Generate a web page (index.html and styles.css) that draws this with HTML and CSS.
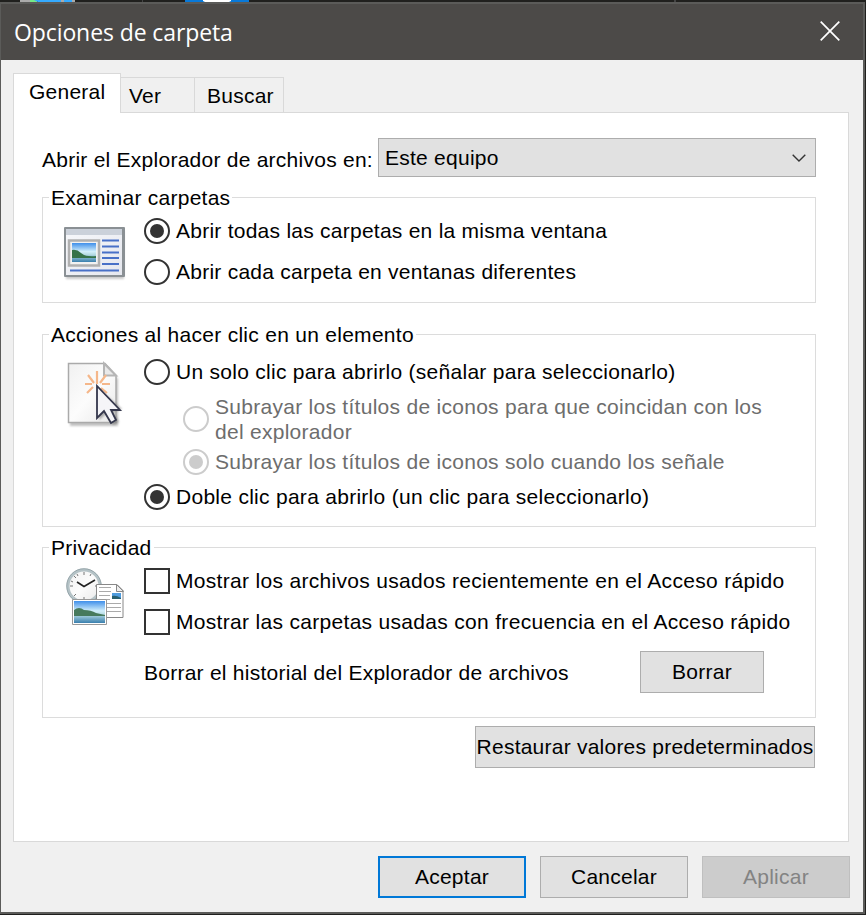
FILE: index.html
```html
<!DOCTYPE html>
<html lang="es">
<head>
<meta charset="utf-8">
<title>Opciones de carpeta</title>
<link rel="stylesheet" href="styles.css">
</head>
<body>
<div class="desktop"><svg width="866" height="2" viewBox="0 0 866 2"><path fill="#aaa" d="M20 0h10v2H20zM61 0h3v2h-3zM72 0h3v2h-3z"/><path fill="#76e887" d="M30 0h7v2h-7z"/><path fill="#35aaff" d="M34 0h27v2H38zM64 0h8v2h-8z"/><path fill="#444" d="M142 0h1v2h-1zM674 0h2v2h-2z"/><path fill="#0879d9" d="M185 0h64v2h-64z"/><path fill="#fff" d="M203 0h28v1l-2 1h-24l-2-1z"/></svg></div>
<main class="window">
  <header class="titlebar">
    <h1>Opciones de carpeta</h1>
    <svg class="close" width="20" height="20" viewBox="0 0 20 20"><path d="M.7.7l18.6 18.6M19.3.7L.7 19.3"/></svg>
  </header>
  <nav class="tabs">
    <span class="tab active">General</span><span class="tab ver">Ver</span><span class="tab buscar">Buscar</span>
  </nav>
  <div class="panel">
    <div class="open-row">
      <span class="open-label">Abrir el Explorador de archivos en:</span>
      <div class="select"><span>Este equipo</span><svg width="14" height="8" viewBox="0 0 14 8"><path d="M.7.8L7 7l6.300-6.200"/></svg></div>
    </div>

    <section class="group browse">
      <h2>Examinar carpetas</h2>
      <svg class="icon" width="68" height="60" viewBox="0 0 68 60">
        <defs>
          <linearGradient id="sky" x2="0" y2="1"><stop stop-color="#3f8fea"/><stop offset=".45" stop-color="#d2effb"/><stop offset=".6" stop-color="#b7dce4"/><stop offset="1" stop-color="#3a7fae"/></linearGradient>
          <linearGradient id="pane" x2="1" y2="1"><stop stop-color="#f7f8fb"/><stop offset="1" stop-color="#e5e7ee"/></linearGradient>
          <linearGradient id="paper" x2="1" y2="1"><stop stop-color="#f1f1f1"/><stop offset=".5" stop-color="#fcfcfc"/><stop offset="1" stop-color="#e8e8e8"/></linearGradient>
          <filter id="soft" x="-20%" y="-20%" width="150%" height="150%"><feGaussianBlur stdDeviation="1.2"/></filter>
        </defs>
        <path d="M4 7h58v48H4z" fill="#777" opacity=".4" filter="url(#soft)"/>
        <rect x="2" y="3" width="61" height="50" rx="1" fill="#8a9094"/>
        <path d="M4 5h56v46H4z" fill="url(#pane)"/><path d="M4 5h56v6H4z" fill="#cbd1da"/>
        <path d="M7 16.500h30v25H7z" fill="#f2f2f2" stroke="#b0b0b0" stroke-width="2.500"/>
        <path d="M10 19h24v19H10z" fill="url(#sky)"/><path d="M10 26q5-1 9 3t15 3v2H10z" fill="#367349"/>
        <path d="M40 16.500h17M40 22.500h17M40 28.500h17M40 34h17M40 40h17M8 46.500h49" stroke="#4870c7" stroke-width="2"/>
      </svg>
      <div class="options">
        <label class="option"><i class="radio on"></i><span>Abrir todas las carpetas en la misma ventana</span></label>
        <label class="option second"><i class="radio"></i><span>Abrir cada carpeta en ventanas diferentes</span></label>
      </div>
    </section>

    <section class="group click">
      <h2>Acciones al hacer clic en un elemento</h2>
      <svg class="icon" width="68" height="70" viewBox="0 0 68 70">
        <path d="M8 6h38l10 12v47H8z" fill="#777" opacity=".45" filter="url(#soft)"/>
        <path d="M6.500 2.500H43l11 12v47H6.500z" fill="url(#paper)" stroke="#aaa" stroke-width="1.500"/>
        <path d="M42 2.500v12h12z" fill="#e9e9e9" stroke="#b5b5b5" stroke-width="2"/>
        <path d="M35 10v13M26 14l6 8M44 14l-6 8M23 23h7M40 23h8M25 32l6-6M39 27l6 5" fill="none" stroke="#f5b78a" stroke-width="2.200"/>
        <path d="M37 28v31l7-6 7 11 6-3-5-10 8-3z" fill="#777" opacity=".6" filter="url(#soft)"/>
        <path d="M35 25v32l7-7 7 12 5-3-5-10h9z" fill="#f5f5f8" stroke="#34374c" stroke-width="1.800"/>
      </svg>
      <div class="options">
        <label class="option"><i class="radio"></i><span>Un solo clic para abrirlo (señalar para seleccionarlo)</span></label>
        <label class="option sub two"><i class="radio"></i><span>Subrayar los títulos de iconos para que coincidan con los<br>del explorador</span></label>
        <label class="option sub"><i class="radio on"></i><span>Subrayar los títulos de iconos solo cuando los señale</span></label>
        <label class="option dbl"><i class="radio on"></i><span>Doble clic para abrirlo (un clic para seleccionarlo)</span></label>
      </div>
    </section>

    <section class="group privacy">
      <h2>Privacidad</h2>
      <svg class="icon" width="68" height="62" viewBox="0 0 68 62">
        <circle cx="22" cy="19" r="16" fill="url(#paper)" stroke="#b4c2c6" stroke-width="3"/>
        <circle cx="22" cy="19" r="17.300" fill="none" stroke="#83939a" stroke-width=".7"/>
        <path d="M22 5v3M22 30v3M8 19h3M33 19h3M12 9l2 2M12 29l2-2M15 7l1 2M29 7l-1 2M9 14l2 1" stroke="#777" stroke-width="1"/>
        <path d="M15 15l7 4.500L33 13" fill="none" stroke="#222" stroke-width="1.600"/>
        <path d="M34.500 17.500H55l6 6v27H34.500z" fill="#fff" stroke="#888"/><path d="M54.500 17.500v7h7z" fill="#eee" stroke="#888"/>
        <path d="M37 20.500h12M37 24.500h12M37 28.500h11M37 32.500h11M43 36.500h16M43 40.500h16M43 44.500h16" stroke="#aaa"/>
        <path d="M50 26h9v6h-9z" fill="#4f9cde"/><path d="M50 29q4-1 9 2v1h-9z" fill="#285f6e"/>
        <path d="M10.500 32.500h34v25h-34z" fill="#fff" stroke="#999"/>
        <path d="M12 34h31v22H12z" fill="url(#sky)"/><path d="M12 43q5-4 10 0 7 0 12 3l9 2v1H12z" fill="#477a5d"/>
      </svg>
      <div class="options">
        <label class="option"><i class="check"></i><span>Mostrar los archivos usados recientemente en el Acceso rápido</span></label>
        <label class="option second"><i class="check"></i><span>Mostrar las carpetas usadas con frecuencia en el Acceso rápido</span></label>
        <div class="history"><span>Borrar el historial del Explorador de archivos</span><button class="btn">Borrar</button></div>
      </div>
    </section>
    <button class="btn restore">Restaurar valores predeterminados</button>
  </div>
  <footer class="actions">
    <button class="btn default">Aceptar</button>
    <button class="btn">Cancelar</button>
    <button class="btn disabled">Aplicar</button>
  </footer>
</main>
</body>
</html>
```
FILE: styles.css
```css
* { box-sizing: border-box; }
body {
  margin: 0;
  width: 866px;
  height: 915px;
  overflow: hidden;
  background: #20201e;
  font: 21px/25px "Liberation Sans", Arial, sans-serif;
  letter-spacing: 0.25px;
  color: #000;
  white-space: nowrap;
}
h1, h2 { margin: 0; font: inherit; }
svg { display: block; flex: none; }
.desktop { height: 2px; }
.window {
  width: 865px;
  height: 912px;
  border: 2px solid #5b5b59;
  border-left-width: 1px;
  background: #f0f0f0;
}
.titlebar {
  display: flex;
  justify-content: space-between;
  height: 56px;
  padding: 17px 23px 0 13px;
  background: #4c4a48;
}
.titlebar h1 {
  margin-top: -1px;
  font: 23px/25px "Open Sans", "Noto Sans", sans-serif;
  letter-spacing: -0.1px;
  color: #fff;
}
.close { fill: none; stroke: #fff; stroke-width: 1.7; }
.tabs {
  display: flex;
  align-items: flex-end;
  height: 53px;
  padding-left: 12px;
  position: relative;
  z-index: 1;
}
.tab {
  height: 36px;
  padding-top: 5px;
  border: 1px solid #d9d9d9;
  border-left: 0;
}
.tab.active {
  width: 108px;
  height: 40px;
  padding: 5px 0 0 15px;
  border-left: 1px solid #d9d9d9;
  border-bottom: 0;
  background: #fff;
}
.ver { width: 74px; padding-left: 8px; }
.buscar { width: 89px; padding-left: 12px; }
.panel {
  display: flex;
  flex-direction: column;
  width: 836px;
  height: 730px;
  margin-left: 12px;
  margin-top: -1px;
  padding: 25px 32px 0 28px;
  border: 1px solid #d9d9d9;
  background: #fff;
}
.open-row { display: flex; justify-content: space-between; height: 39px; }
.open-label { padding-top: 9px; }
.select {
  display: flex;
  align-items: center;
  justify-content: space-between;
  width: 438px;
  height: 39px;
  padding: 0 9px 0 6px;
  border: 1px solid #adadad;
  background: #e1e1e1;
}
.select svg { fill: none; stroke: #333; stroke-width: 1.4; }
.group {
  display: grid;
  grid-template-columns: 101px 1fr;
  grid-template-rows: 15px 1fr;
  border: 1px solid #dcdcdc;
}
.group h2 {
  grid-column: 1 / -1;
  justify-self: start;
  height: 25px;
  margin: -13px 0 0 6px;
  padding: 0 2px;
  background: #fff;
}
.browse { height: 106px; margin-top: 20px; }
.click { height: 193px; margin-top: 31px; letter-spacing: 0.28px; }
.privacy { height: 171px; margin-top: 20px; }
.icon { margin: 11px 0 0 19px; }
.privacy .icon { margin-top: 4px; }
.options { padding-top: 5px; }
.click .options { padding-top: 9px; }
.option { display: flex; align-items: center; gap: 6px; height: 26px; }
.option span { padding-bottom: 2px; }
.privacy .option { letter-spacing: 0.31px; }
.second { margin-top: 15px; }
.radio {
  display: grid;
  place-items: center;
  flex: none;
  width: 26px;
  height: 26px;
  border: 2px solid #333;
  border-radius: 50%;
}
.radio.on::after { content: ""; width: 14px; height: 14px; border-radius: 50%; background: #333; }
.sub { margin-left: 39px; color: #6d6d6d; }
.sub .radio { border-color: #ccc; }
.sub .radio.on::after { background: #ccc; }
.two { height: 50px; margin: 9px 0 5px 39px; }
.two span { padding-bottom: 0; }
.dbl { margin-top: 9px; }
.check { flex: none; width: 26px; height: 26px; border: 2px solid #333; }
.history { display: flex; justify-content: space-between; align-items: center; margin-top: 16px; padding-right: 51px; height: 42px; }
.btn {
  width: 124px;
  height: 42px;
  padding: 0 0 2px;
  border: 1px solid #adadad;
  border-radius: 0;
  background: #e1e1e1;
  color: #000;
  font: inherit;
  letter-spacing: inherit;
}
.restore { flex: none; align-self: flex-end; width: 340px; margin: 8px 1px 0 0; letter-spacing: 0.23px; }
.actions { display: flex; justify-content: flex-end; gap: 14px; padding: 14px 13px 0 0; }
.actions .btn { width: 148px; }
.actions .default { border: 2px solid #0078d7; }
.actions .disabled { border-color: #bfbfbf; background: #ccc; color: #838383; }
```
